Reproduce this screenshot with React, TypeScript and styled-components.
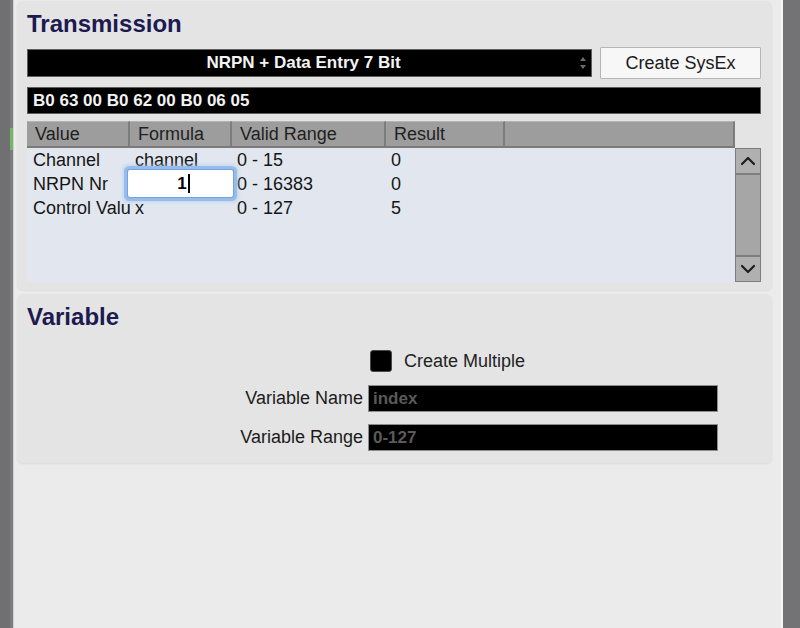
import styled, { createGlobalStyle } from 'styled-components'

const GlobalStyle = createGlobalStyle`
    html, body {
        margin: 0;
        padding: 0;
    }
    body {
        width: 800px;
        height: 628px;
        overflow: hidden;
        background: #ebebeb;
        font-family: "Liberation Sans", Arial, sans-serif;
    }
    * {
        box-sizing: border-box;
    }
`

const columns = '103px 102px 154px 119px 1fr'

const rows = [
    { value: 'Channel', formula: 'channel', range: '0 - 15', result: '0', editing: false },
    { value: 'NRPN Nr', formula: '1', range: '0 - 16383', result: '0', editing: true },
    { value: 'Control Value', formula: 'x', range: '0 - 127', result: '5', editing: false },
]

function Chevron({ down }: { down?: boolean }) {
    return (
        <svg width="16" height="10" viewBox="0 0 16 10" fill="none">
            <path
                d={down ? 'M2 2 L8 8 L14 2' : 'M2 8 L8 2 L14 8'}
                stroke="#1e1e1e"
                strokeWidth="2.2"
                strokeLinecap="round"
                strokeLinejoin="round"
            />
        </svg>
    )
}

function Stepper() {
    return (
        <svg width="8" height="18" viewBox="0 0 8 18">
            <path d="M1 7 L4 3 L7 7 Z" fill="#6c6c6c" />
            <path d="M1 11 L4 15 L7 11 Z" fill="#6c6c6c" />
        </svg>
    )
}

export default function App() {
    return (
        <>
            <GlobalStyle />
            <StyledPage>
                <StyledLeftStrip>
                    <StyledStripMark />
                </StyledLeftStrip>
                <StyledWindow>
                    <StyledPanel $top={1}>
                        <StyledTitle>Transmission</StyledTitle>
                        <StyledControlRow>
                            <StyledSelect>
                                <StyledSelectText>NRPN + Data Entry 7 Bit</StyledSelectText>
                                <Stepper />
                            </StyledSelect>
                            <StyledButton>Create SysEx</StyledButton>
                        </StyledControlRow>
                        <StyledHexField>B0 63 00 B0 62 00 B0 06 05</StyledHexField>
                        <StyledTableWrap>
                            <StyledTableMain>
                                <StyledHeader>
                                    <StyledHeaderCell>Value</StyledHeaderCell>
                                    <StyledHeaderCell>Formula</StyledHeaderCell>
                                    <StyledHeaderCell>Valid Range</StyledHeaderCell>
                                    <StyledHeaderCell>Result</StyledHeaderCell>
                                    <StyledHeaderCell />
                                </StyledHeader>
                                <StyledBody>
                                    {rows.map(row => (
                                        <StyledRow key={row.value}>
                                            <StyledNameCell>{row.value}</StyledNameCell>
                                            <StyledCell>
                                                {row.editing ? (
                                                    <StyledEditor>
                                                        {row.formula}
                                                        <StyledCaret />
                                                    </StyledEditor>
                                                ) : row.formula}
                                            </StyledCell>
                                            <StyledCell>{row.range}</StyledCell>
                                            <StyledCell>{row.result}</StyledCell>
                                            <StyledCell />
                                        </StyledRow>
                                    ))}
                                </StyledBody>
                            </StyledTableMain>
                            <StyledScrollColumn>
                                <StyledScrollbar>
                                    <StyledScrollButton $pos="top">
                                        <Chevron />
                                    </StyledScrollButton>
                                    <StyledScrollButton $pos="bottom">
                                        <Chevron down />
                                    </StyledScrollButton>
                                </StyledScrollbar>
                            </StyledScrollColumn>
                        </StyledTableWrap>
                    </StyledPanel>

                    <StyledPanel $top={4} $bottom={12}>
                        <StyledTitle>Variable</StyledTitle>
                        <StyledForm>
                            <StyledCheckRow>
                                <StyledCheckbox />
                                <StyledFormText>Create Multiple</StyledFormText>
                            </StyledCheckRow>
                            <StyledFieldLabel>Variable Name</StyledFieldLabel>
                            <StyledFieldInput>index</StyledFieldInput>
                            <StyledFieldLabel>Variable Range</StyledFieldLabel>
                            <StyledFieldInput>0-127</StyledFieldInput>
                        </StyledForm>
                    </StyledPanel>
                </StyledWindow>
                <StyledRightStrip />
            </StyledPage>
        </>
    )
}

const StyledPage = styled.div`
    display: flex;
    width: 800px;
    height: 628px;
`

const StyledLeftStrip = styled.div`
    width: 13px;
    background: linear-gradient(to right, #707072 0, #707072 10px, #7c7c7e 10px);
    display: flex;
    flex-direction: column;
    align-items: flex-end;
    padding-top: 128px;
`

const StyledStripMark = styled.div`
    width: 3px;
    height: 22px;
    background: #74b866;
`

const StyledWindow = styled.div`
    flex: 1;
    display: flex;
    flex-direction: column;
    background: #ebebeb;
    border-left: 1px solid #cfcfcf;
    border-right: 2px solid #f7f7f7;
    padding: 0 9px 0 3px;
`

const StyledRightStrip = styled.div`
    width: 17px;
    background: #737375;
`

const StyledPanel = styled.section<{ $top: number; $bottom?: number }>`
    margin-top: ${p => p.$top}px;
    padding: 8px 11px ${p => p.$bottom ?? 8}px 10px;
    background: #e4e4e4;
    border-radius: 6px;
    box-shadow: 0 1px 2px rgba(0, 0, 0, 0.07);
    display: flex;
    flex-direction: column;
`

const StyledTitle = styled.h2`
    margin: 0;
    font-size: 24px;
    line-height: 30px;
    font-weight: 700;
    color: #1d1a50;
`

const StyledControlRow = styled.div`
    display: flex;
    align-items: center;
    gap: 8px;
    height: 32px;
    margin-top: 8px;
`

const StyledSelect = styled.div`
    flex: 1;
    height: 28px;
    display: flex;
    align-items: center;
    padding-right: 4px;
    background: #000;
    border: 1px solid #5e5e5e;
`

const StyledSelectText = styled.span`
    flex: 1;
    text-align: center;
    color: #f4f4f4;
    font-size: 17px;
    font-weight: 700;
`

const StyledButton = styled.button`
    width: 161px;
    height: 32px;
    background: #f7f7f7;
    border: 1px solid #b6b6b6;
    border-radius: 1px;
    font-family: inherit;
    font-size: 18px;
    color: #1b1b1b;
    padding: 0;
`

const StyledHexField = styled.div`
    height: 27px;
    margin-top: 8px;
    display: flex;
    align-items: center;
    padding-left: 5px;
    background: #000;
    border: 1px solid #5e5e5e;
    color: #f2f2f2;
    font-size: 17px;
    font-weight: 700;
`

const StyledTableWrap = styled.div`
    display: flex;
    margin-top: 7px;
`

const StyledTableMain = styled.div`
    flex: 1;
    display: flex;
    flex-direction: column;
`

const StyledHeader = styled.div`
    display: grid;
    grid-template-columns: ${columns};
    height: 27px;
`

const StyledHeaderCell = styled.div`
    display: flex;
    align-items: center;
    padding-left: 8px;
    background: #9d9d9d;
    border-top: 1px solid #b3b3b3;
    border-right: 2px solid #7c7c7c;
    border-bottom: 2px solid #7a7a7a;
    font-size: 18px;
    color: #1f1f1f;
    white-space: nowrap;
`

const StyledBody = styled.div`
    height: 134px;
    background: #e2e7ef;
`

const StyledRow = styled.div`
    display: grid;
    grid-template-columns: ${columns};
    height: 24px;
`

const StyledCell = styled.div`
    position: relative;
    display: flex;
    align-items: center;
    padding-left: 5px;
    font-size: 18px;
    color: #151515;
    white-space: nowrap;
`

const StyledNameCell = styled(StyledCell)`
    padding-left: 6px;
    overflow: hidden;
`

const StyledEditor = styled.div`
    position: absolute;
    top: -2px;
    left: -2px;
    right: -1px;
    bottom: -1px;
    z-index: 1;
    display: flex;
    align-items: center;
    justify-content: center;
    padding-left: 6px;
    background: #fff;
    border-radius: 2px;
    box-shadow:
        0 0 0 1px rgba(110, 160, 225, 0.9),
        0 0 0 4px rgba(135, 178, 232, 0.75),
        0 0 3px 6px rgba(170, 202, 240, 0.45);
    font-size: 17px;
    font-weight: 700;
    color: #000;
`

const StyledCaret = styled.span`
    width: 2px;
    height: 19px;
    margin-left: 1px;
    background: #000;
`

const StyledScrollColumn = styled.div`
    width: 26px;
    padding-top: 27px;
`

const StyledScrollbar = styled.div`
    height: 134px;
    display: flex;
    flex-direction: column;
    justify-content: space-between;
    background: #a6a6a6;
    border: 1px solid #7d7d7d;
`

const StyledScrollButton = styled.div<{ $pos: 'top' | 'bottom' }>`
    height: 26px;
    display: flex;
    align-items: center;
    justify-content: center;
    background: #b0b0b0;
    ${p => p.$pos === 'top' ? 'border-bottom' : 'border-top'}: 2px solid #7e7e7e;
`

const StyledForm = styled.div`
    display: grid;
    grid-template-columns: 336px 350px;
    column-gap: 5px;
    row-gap: 12px;
    align-items: center;
    margin-top: 18px;
`

const StyledCheckRow = styled.div`
    grid-column: 2;
    display: flex;
    align-items: center;
    gap: 12px;
    padding-left: 2px;
    height: 22px;
    margin-bottom: 1px;
`

const StyledCheckbox = styled.div`
    width: 22px;
    height: 22px;
    background: #000;
    border: 1px solid #4a4a4a;
    border-radius: 3px;
`

const StyledFormText = styled.span`
    font-size: 18px;
    color: #222;
`

const StyledFieldLabel = styled.span`
    text-align: right;
    font-size: 18px;
    color: #1b1b1b;
`

const StyledFieldInput = styled.div`
    height: 27px;
    display: flex;
    align-items: center;
    padding-left: 4px;
    background: #000;
    border: 1px solid #8c8c8c;
    color: #5a5a5a;
    font-size: 17px;
    font-weight: 700;
`
